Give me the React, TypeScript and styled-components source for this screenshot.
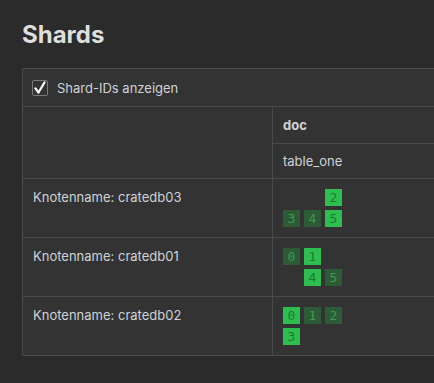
import { createGlobalStyle, styled } from "styled-components";

type Shard = { id: number; primary: boolean };
type Node = { name: string; shards: Shard[] };

const nodes: Node[] = [
  {
    name: "cratedb03",
    shards: [
      { id: 2, primary: true },
      { id: 3, primary: false },
      { id: 4, primary: false },
      { id: 5, primary: true },
    ],
  },
  {
    name: "cratedb01",
    shards: [
      { id: 0, primary: false },
      { id: 1, primary: true },
      { id: 4, primary: true },
      { id: 5, primary: false },
    ],
  },
  {
    name: "cratedb02",
    shards: [
      { id: 0, primary: true },
      { id: 1, primary: false },
      { id: 2, primary: false },
      { id: 3, primary: true },
    ],
  },
];

const GlobalStyle = createGlobalStyle`
  html, body {
    margin: 0;
    background: #2b2b2b;
    overflow: hidden;
  }
  body {
    font-family: Inter, "Noto Sans", sans-serif;
    color: #cfd2d6;
  }
`;

const Page = styled.div`
  padding: 20px 0 0 22px;
`;

const Title = styled.h1`
  margin: 0 0 18px;
  font-size: 24px;
  line-height: 30px;
  font-weight: 700;
  color: #dedede;
`;

const Panel = styled.div`
  width: 640px;
  background: #333333;
  border: 1px solid #4a4a4a;
`;

const Toolbar = styled.label`
  display: flex;
  align-items: center;
  gap: 9px;
  height: 37px;
  padding: 0 9px;
  font-size: 13px;
`;

const CheckBox = styled.span`
  width: 14px;
  height: 14px;
  border: 1px solid #7a7a7a;
  border-radius: 2px;
  display: flex;
  align-items: center;
  justify-content: center;
`;

const Table = styled.table`
  width: 100%;
  border-collapse: collapse;
  font-size: 13px;

  td,
  th {
    border-top: 1px solid #4a4a4a;
    padding: 10px;
    vertical-align: top;
    text-align: left;
    line-height: 16px;
  }
`;

const NodeCell = styled.td`
  width: 229px;
  border-right: 1px solid #4a4a4a;
`;

const HeadCell = styled.th<{ $bold?: boolean }>`
  font-weight: ${(p) => (p.$bold ? 700 : 400)};
  padding: ${(p) => (p.$bold ? "10px" : "9px 10px")} !important;
`;

const ShardGrid = styled.div`
  display: grid;
  grid-template-columns: repeat(3, 17px);
  grid-auto-rows: 17px;
  gap: 4px;
`;

const ShardBox = styled.span<{ $primary: boolean; $col: number; $row: number }>`
  grid-column: ${(p) => p.$col};
  grid-row: ${(p) => p.$row};
  display: flex;
  align-items: center;
  justify-content: center;
  font-family: "DejaVu Sans Mono", monospace;
  font-size: 13px;
  line-height: 17px;
  background: ${(p) => (p.$primary ? "#2dbe4f" : "#2d5a37")};
  color: ${(p) => (p.$primary ? "#1d7a33" : "#3a9d4c")};
`;

const App = () => {
  return (
    <Page>
      <GlobalStyle />
      <Title>Shards</Title>
      <Panel>
        <Toolbar>
          <CheckBox>
            <svg width="14" height="14" viewBox="0 0 14 14">
              <path
                d="M2.5 7.5 L5.5 11.5 L11.5 1.5"
                fill="none"
                stroke="#ffffff"
                strokeWidth="2.2"
                strokeLinecap="round"
                strokeLinejoin="round"
              />
            </svg>
          </CheckBox>
          Shard-IDs anzeigen
        </Toolbar>
        <Table>
          <tbody>
            <tr>
              <NodeCell rowSpan={2} />
              <HeadCell $bold>doc</HeadCell>
            </tr>
            <tr>
              <HeadCell>table_one</HeadCell>
            </tr>
            {nodes.map((node) => (
              <tr key={node.name}>
                <NodeCell>Knotenname: {node.name}</NodeCell>
                <td>
                  <ShardGrid>
                    {node.shards.map((s) => (
                      <ShardBox
                        key={s.id}
                        $primary={s.primary}
                        $col={(s.id % 3) + 1}
                        $row={Math.floor(s.id / 3) + 1}
                      >
                        {s.id}
                      </ShardBox>
                    ))}
                  </ShardGrid>
                </td>
              </tr>
            ))}
          </tbody>
        </Table>
      </Panel>
    </Page>
  );
};

export default App;
